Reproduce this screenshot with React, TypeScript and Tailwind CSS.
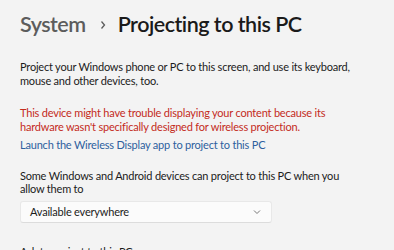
import React from "react";

export default function App() {
  return (
    <div
      className="w-[394px] h-[250px] overflow-hidden bg-[#f3f3f3] text-[#1b1b1b] pl-[20px] tracking-[-0.2px]"
      style={{ fontFamily: 'Lato, "Noto Sans", sans-serif' }}
    >
      <div className="flex items-center h-[48px] pt-[1px] text-[21.5px] font-semibold leading-none tracking-[-0.5px]">
        <span className="text-[#5c5c5c]">System</span>
        <span className="ml-[13px] mr-[11px] text-[#5c5c5c]">
          <svg width="8" height="10" viewBox="0 0 8 10" fill="none">
            <path d="M2.5 1.5 L5.5 5 L2.5 8.5" stroke="#5c5c5c" strokeWidth="1.3" />
          </svg>
        </span>
        <span className="text-[#1a1a1a]">Projecting to this PC</span>
      </div>
      <div className="text-[11px] leading-[14px] mt-[12px] w-[340px]">
        Project your Windows phone or PC to this screen, and use its keyboard,
        mouse and other devices, too.
      </div>
      <div className="text-[11px] leading-[14px] mt-[18px] text-[#c42b1c] w-[340px]">
        This device might have trouble displaying your content because its
        hardware wasn't specifically designed for wireless projection.
      </div>
      <div className="text-[11px] leading-[14px] mt-[4px] text-[#2e5f9e]">
        Launch the Wireless Display app to project to this PC
      </div>
      <div className="text-[11px] leading-[13px] mt-[17px] w-[340px]">
        Some Windows and Android devices can project to this PC when you allow
        them to
      </div>
      <div className="mt-[6px] w-[252px] h-[22px] flex items-center justify-between pl-[9px] pr-[10px] bg-[#fbfbfb] border border-[#e8e8e8] border-b-[#dcdcdc] rounded-[3px] text-[11px]">
        <span>Available everywhere</span>
        <svg width="8" height="6" viewBox="0 0 8 6" fill="none">
          <path d="M1 1.5 L4 4.5 L7 1.5" stroke="#777" strokeWidth="1" />
        </svg>
      </div>
      <div className="text-[11px] leading-[14px] mt-[22px]">Ask to project to this PC</div>
    </div>
  );
}
